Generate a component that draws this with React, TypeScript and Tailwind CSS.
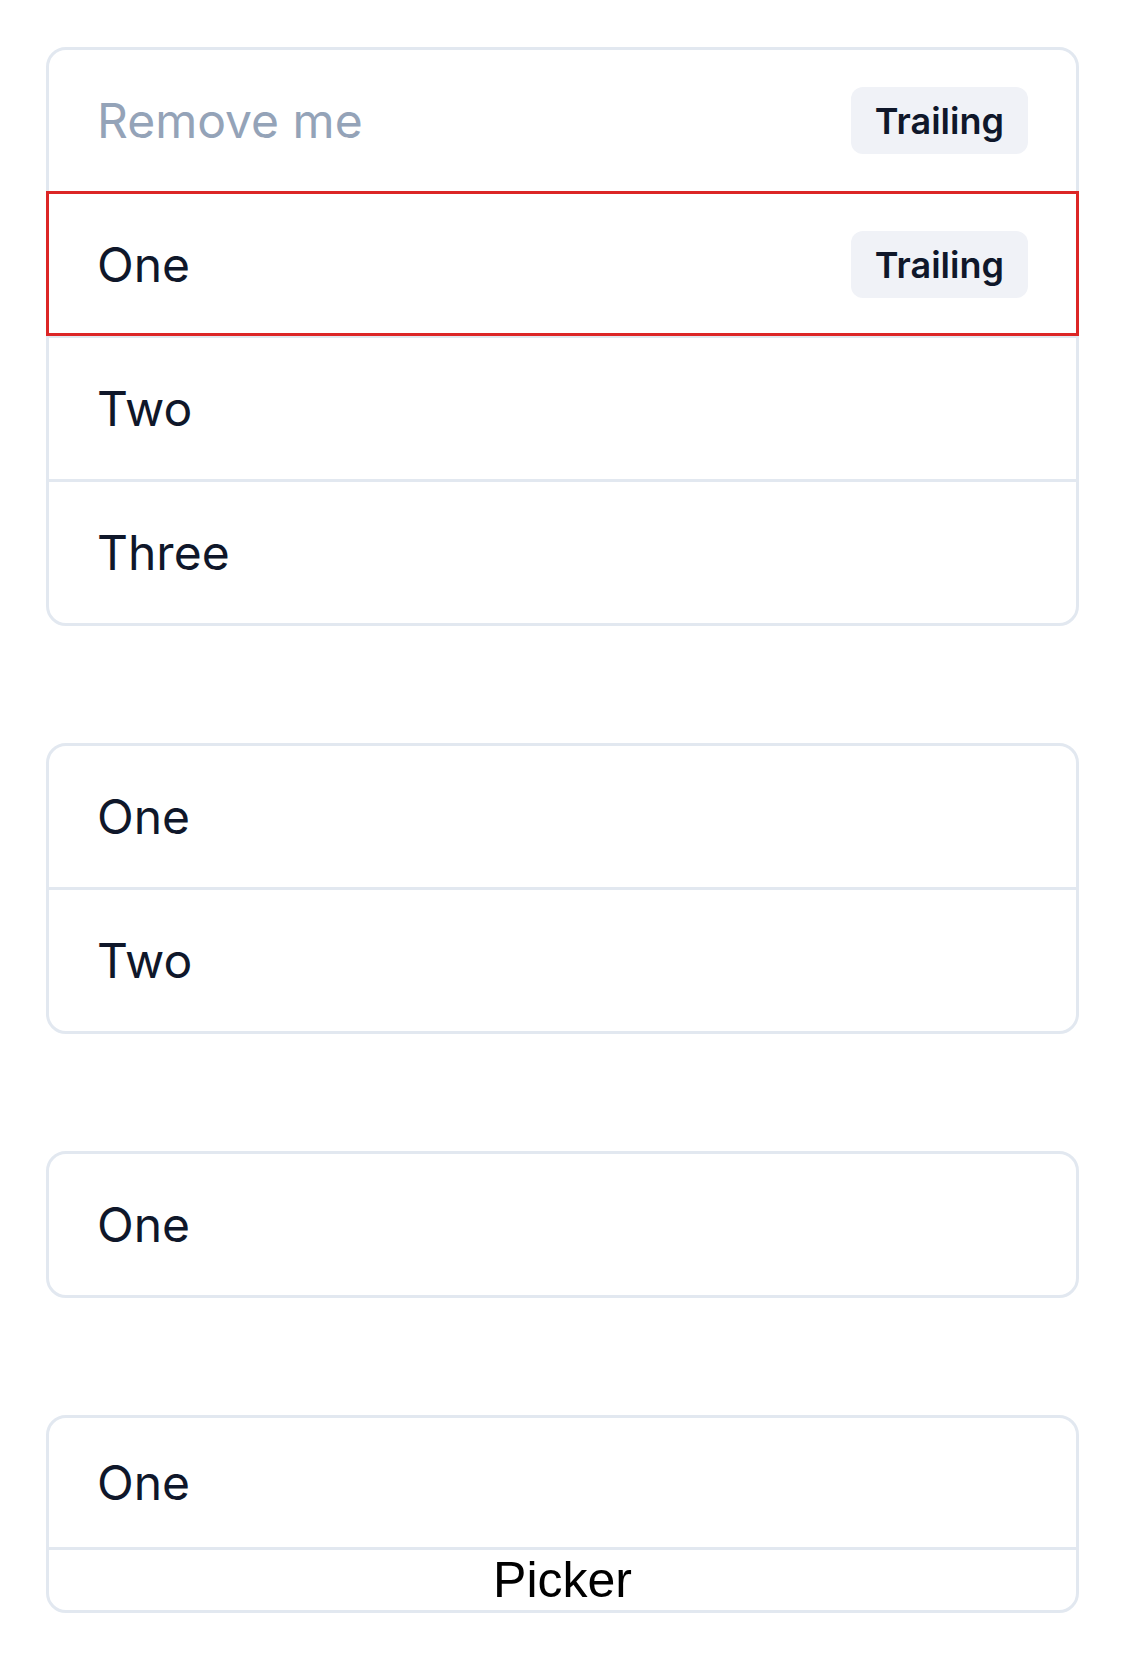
const inter = { fontFamily: 'Inter, "Noto Sans", sans-serif' }

function Badge() {
  return (
    <span className="flex h-[67px] items-center rounded-[12px] bg-[#f0f2f7] px-[24px] text-[36px] font-semibold leading-none text-[#0f172a]">
      Trailing
    </span>
  )
}

function Row({
  label,
  first,
  muted,
  trailing,
  selected,
  short,
}: {
  label: string
  first?: boolean
  muted?: boolean
  trailing?: boolean
  selected?: boolean
  short?: boolean
}) {
  // box-sizing is border-box, so rows with a divider are 3px taller
  const height = short ? 'h-[129px]' : first ? 'h-[141px]' : 'h-[144px] border-t-[3px] border-[#e2e8f0]'
  return (
    <div className={'relative flex items-center justify-between px-[48px] ' + height}>
      <span className={'text-[48px] leading-none ' + (muted ? 'text-[#94a3b8]' : 'text-[#0f172a]')}>
        {label}
      </span>
      {trailing && <Badge />}
      {selected && (
        <div className="pointer-events-none absolute -top-[3px] -left-[3px] -right-[3px] -bottom-[1px] z-10 border-[3px] border-[#dc2626]" />
      )}
    </div>
  )
}

function Card({ children }: { children: React.ReactNode }) {
  return (
    <div className="rounded-[20px] border-[3px] border-[#e2e8f0] bg-white">{children}</div>
  )
}

export default function App() {
  return (
    <div className="min-h-[1659px] bg-white px-[46px] pt-[47px]" style={inter}>
      <div className="flex flex-col gap-[117px]">
        <Card>
          <Row label="Remove me" first muted trailing />
          <Row label="One" trailing selected />
          <Row label="Two" />
          <Row label="Three" />
        </Card>

        <Card>
          <Row label="One" first />
          <Row label="Two" />
        </Card>

        <Card>
          <Row label="One" first />
        </Card>

        <Card>
          <Row label="One" first short />
          <div className="flex h-[63px] items-center justify-center border-t-[3px] border-[#e2e8f0]">
            <span
              className="text-[50px] leading-none text-black"
              style={{ fontFamily: '"Liberation Sans", Arial, sans-serif' }}
            >
              Picker
            </span>
          </div>
        </Card>
      </div>
    </div>
  )
}
